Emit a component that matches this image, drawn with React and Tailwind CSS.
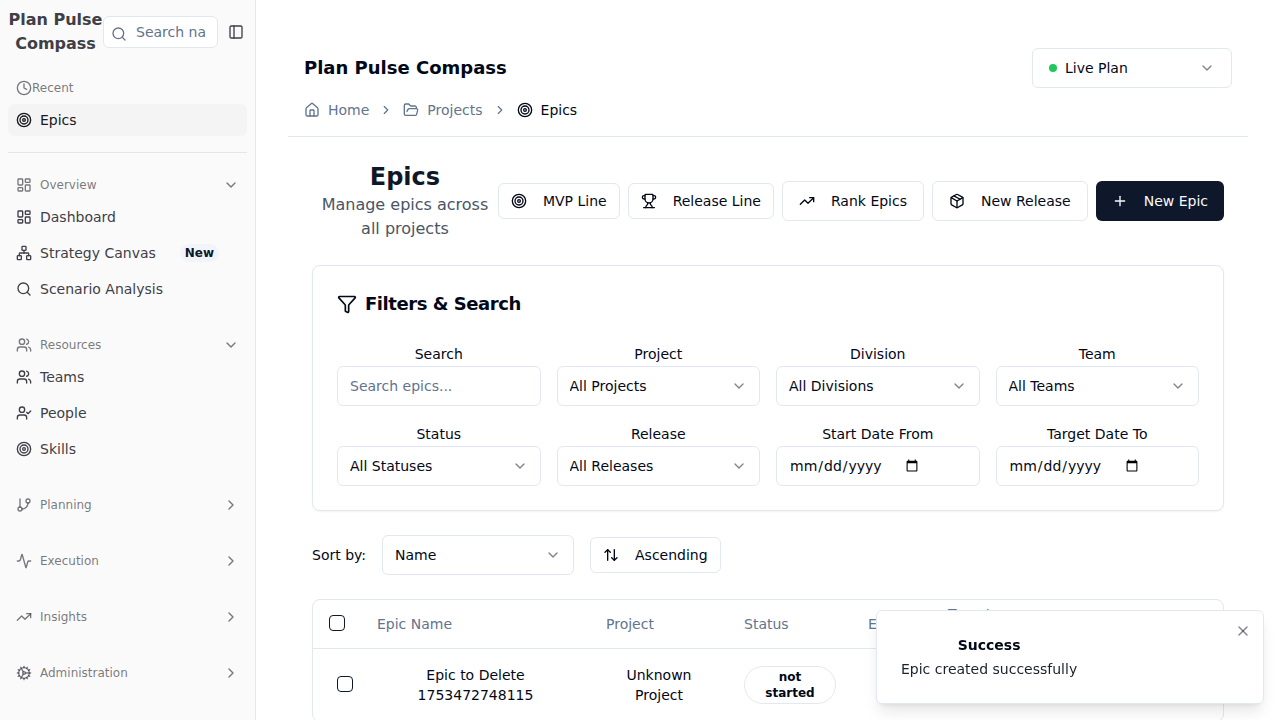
import React from 'react';
import {
  Activity, ArrowUpDown, ChevronDown, ChevronRight, Clock, Cog, Filter, FolderOpen,
  GitBranch, House, LayoutDashboard, Network, Package, PanelLeft, Plus, Search,
  Target, TrendingUp, Trophy, UserCheck, Users, X,
} from 'lucide-react';

const navGroups = [
  {
    label: 'Overview',
    icon: LayoutDashboard,
    items: [
      { label: 'Dashboard', icon: LayoutDashboard },
      { label: 'Strategy Canvas', icon: Network, badge: 'New' },
      { label: 'Scenario Analysis', icon: Search },
    ],
  },
  {
    label: 'Resources',
    icon: Users,
    items: [
      { label: 'Teams', icon: Users },
      { label: 'People', icon: UserCheck },
      { label: 'Skills', icon: Target },
    ],
  },
  { label: 'Planning', icon: GitBranch },
  { label: 'Execution', icon: Activity },
  { label: 'Insights', icon: TrendingUp },
  { label: 'Administration', icon: Cog },
];

function NavLink({ icon: Icon, label, badge, active }) {
  return (
    <a
      href="#"
      className={
        active
          ? 'flex h-8 items-center gap-2 rounded-md bg-zinc-100 px-2 text-sm text-zinc-900'
          : 'flex h-8 items-center gap-2 rounded-md px-2 text-sm text-zinc-700'
      }
    >
      <Icon className="size-4 shrink-0" />
      <span>{label}</span>
      {badge && (
        <span className="ml-4 rounded-full border border-transparent bg-slate-100 px-1 text-xs font-semibold text-slate-900">
          {badge}
        </span>
      )}
    </a>
  );
}

function NavGroup({ label, icon: Icon, items }) {
  const Chevron = items ? ChevronDown : ChevronRight;
  return (
    <div className="p-2">
      <button
        type="button"
        aria-expanded={Boolean(items)}
        className="flex h-8 w-full items-center gap-2 rounded-md px-2 text-xs text-zinc-700/70"
      >
        <Icon className="size-4 shrink-0" />
        <span>{label}</span>
        <Chevron className="ml-auto size-4" />
      </button>
      {items && (
        <div className="flex flex-col gap-1">
          {items.map((item) => (
            <NavLink key={item.label} {...item} />
          ))}
        </div>
      )}
    </div>
  );
}

function Sidebar() {
  return (
    <aside className="sticky top-0 h-screen w-64 shrink-0 overflow-hidden border-r border-slate-200 bg-neutral-50">
      <div className="flex items-center py-2 pr-[5px] pl-2">
        <h2 className="w-[95px] shrink-0 text-center text-base font-semibold text-zinc-700">
          Plan Pulse Compass
        </h2>
        <div className="relative min-w-0 flex-1">
          <Search className="absolute top-2.5 left-2 size-4 text-slate-500" />
          <input
            type="text"
            aria-label="Search navigation"
            placeholder="Search navigation..."
            className="block h-8 w-full rounded-md border border-slate-200 bg-white pr-3 pl-8 text-sm placeholder:text-slate-500"
          />
        </div>
        <button
          type="button"
          aria-label="Toggle sidebar"
          className="ml-1 flex size-7 shrink-0 items-center justify-center rounded-md text-zinc-700"
        >
          <PanelLeft className="size-4" />
        </button>
      </div>
      <nav className="flex flex-col gap-2">
        <div className="p-2">
          <div className="flex h-8 items-center px-2 text-xs text-zinc-700/70">
            <Clock className="size-4" />
            Recent
          </div>
          <NavLink icon={Target} label="Epics" active />
        </div>
        <div>
          <hr className="mx-2 border-neutral-200" />
          <div className="pt-2">
            <NavGroup {...navGroups[0]} />
          </div>
        </div>
        {navGroups.slice(1).map((group) => (
          <NavGroup key={group.label} {...group} />
        ))}
      </nav>
    </aside>
  );
}

function Select({ id, value, label }) {
  return (
    <div className="relative">
      <select
        id={id}
        aria-label={label}
        className="block h-10 w-full appearance-none rounded-md border border-slate-200 bg-white pr-9 pl-3 text-sm"
      >
        <option>{value}</option>
      </select>
      <ChevronDown className="pointer-events-none absolute top-3 right-[13px] size-4 opacity-50" />
    </div>
  );
}

function Field({ id, label, children }) {
  return (
    <div>
      <div className="text-center">
        <label htmlFor={id} className="text-sm">{label}</label>
      </div>
      {children}
    </div>
  );
}

function Button({ icon: Icon, small, primary, children }) {
  return (
    <button
      type="button"
      className={
        primary
          ? 'flex h-10 items-center gap-4 rounded-md bg-slate-900 px-4 text-sm whitespace-nowrap text-slate-50'
          : small
            ? 'flex h-9 items-center gap-4 rounded-md border border-slate-200 bg-white px-3 text-sm whitespace-nowrap'
            : 'flex h-10 items-center gap-4 rounded-md border border-slate-200 bg-white px-4 text-sm whitespace-nowrap'
      }
    >
      <Icon className="size-4" />
      {children}
    </button>
  );
}

function Checkbox({ label }) {
  return (
    <input
      type="checkbox"
      aria-label={label}
      className="size-4 appearance-none rounded-sm border border-slate-900 bg-white align-[-2px] checked:bg-slate-900"
    />
  );
}

const inputClass =
  'flex h-10 w-full rounded-md border border-slate-200 bg-white px-3 py-2 text-sm placeholder:text-slate-500';

function PageHeader() {
  return (
    <header className="flex flex-col gap-3 border-b border-slate-200 p-4">
      <div className="flex items-center justify-between">
        <h2 className="text-lg font-semibold">Plan Pulse Compass</h2>
        <div className="relative">
          <span className="pointer-events-none absolute top-4 left-[17px] size-2 rounded-full bg-[#22c55e]" />
          <select
            aria-label="Plan"
            className="block h-10 w-[200px] appearance-none rounded-md border border-slate-200 bg-white pr-9 pl-8 text-sm"
          >
            <option>Live Plan</option>
          </select>
          <ChevronDown className="pointer-events-none absolute top-3 right-[17px] size-4 opacity-50" />
        </div>
      </div>
      <nav aria-label="Breadcrumb" className="flex items-center gap-2.5 text-sm text-slate-500">
        <a href="#" className="flex items-center gap-2">
          <House className="size-4" />
          Home
        </a>
        <ChevronRight className="size-3.5" />
        <a href="#" className="flex items-center gap-2">
          <FolderOpen className="size-4" />
          Projects
        </a>
        <ChevronRight className="size-3.5" />
        <span aria-current="page" className="flex items-center gap-2 text-[#020817]">
          <Target className="size-4" />
          Epics
        </span>
      </nav>
    </header>
  );
}

function EpicsTable() {
  return (
    <div className="overflow-hidden rounded-lg border border-slate-200">
      <table className="w-full table-fixed text-sm">
        <colgroup>
          <col className="w-12" />
          <col className="w-[229px]" />
          <col className="w-[138px]" />
          <col className="w-[124px]" />
          <col className="w-20" />
          <col className="w-[90px]" />
          <col />
        </colgroup>
        <thead>
          <tr className="h-12 border-b border-slate-200 text-left text-slate-500">
            <th className="pl-4 font-medium"><Checkbox label="Select all epics" /></th>
            <th className="px-4 font-medium">Epic Name</th>
            <th className="px-4 font-medium">Project</th>
            <th className="px-4 font-medium">Status</th>
            <th className="px-4 font-medium">Effort</th>
            <th className="px-4 font-medium">Target Date</th>
            <th />
          </tr>
        </thead>
        <tbody>
          <tr className="text-center">
            <td className="py-4 pl-4"><Checkbox label="Select Epic to Delete" /></td>
            <td className="p-4">
              <div className="mx-auto max-w-32">Epic to Delete 1753472748115</div>
            </td>
            <td className="p-4">
              <div className="mx-auto max-w-20">Unknown Project</div>
            </td>
            <td className="px-4">
              <div className="rounded-full border border-slate-200 px-2.5 py-0.5 text-xs font-semibold">
                not started
              </div>
            </td>
            <td />
            <td />
            <td />
          </tr>
        </tbody>
      </table>
    </div>
  );
}

function Toast() {
  return (
    <div
      role="status"
      className="fixed right-4 bottom-4 flex w-[388px] items-center rounded-md border border-slate-200 bg-white p-6 pr-8 shadow-lg"
    >
      <div className="grid gap-1 text-center text-sm">
        <div className="font-semibold">Success</div>
        <div className="opacity-90">Epic created successfully</div>
      </div>
      <button
        type="button"
        aria-label="Close"
        className="absolute top-2 right-2 rounded-md p-1 text-[#020817]/50"
      >
        <X className="size-4" />
      </button>
    </div>
  );
}

export default function App() {
  return (
    <div className="flex min-h-screen bg-white font-['DejaVu_Sans',sans-serif] text-[#020817]">
      <Sidebar />
      <main className="min-w-0 flex-1 p-8">
        <PageHeader />
        <div className="flex flex-col gap-6 p-6">
          <div className="flex items-center justify-between">
            <div className="min-w-0 flex-1 px-2 text-center">
              <h1 className="text-2xl font-bold text-gray-900">Epics</h1>
              <p className="text-gray-600">Manage epics across all projects</p>
            </div>
            <div className="flex shrink-0 items-center gap-2">
              <Button icon={Target} small>MVP Line</Button>
              <Button icon={Trophy} small>Release Line</Button>
              <Button icon={TrendingUp}>Rank Epics</Button>
              <Button icon={Package}>New Release</Button>
              <Button icon={Plus} primary>New Epic</Button>
            </div>
          </div>

          <section className="rounded-lg border border-slate-200 bg-white p-6 shadow-xs">
            <h3 className="mb-6 flex items-center gap-2 text-lg font-semibold tracking-tight">
              <Filter className="size-5" />
              Filters &amp; Search
            </h3>
            <div className="grid grid-cols-4 gap-4">
              <Field id="search" label="Search">
                <input id="search" type="text" placeholder="Search epics..." className={inputClass} />
              </Field>
              <Field id="project" label="Project">
                <Select id="project" value="All Projects" />
              </Field>
              <Field id="division" label="Division">
                <Select id="division" value="All Divisions" />
              </Field>
              <Field id="team" label="Team">
                <Select id="team" value="All Teams" />
              </Field>
              <Field id="status" label="Status">
                <Select id="status" value="All Statuses" />
              </Field>
              <Field id="release" label="Release">
                <Select id="release" value="All Releases" />
              </Field>
              <Field id="start-date" label="Start Date From">
                <input id="start-date" type="date" className={inputClass} />
              </Field>
              <Field id="target-date" label="Target Date To">
                <input id="target-date" type="date" className={inputClass} />
              </Field>
            </div>
          </section>

          <div className="flex items-center gap-4">
            <label htmlFor="sort" className="text-sm">Sort by:</label>
            <div className="w-48">
              <Select id="sort" value="Name" />
            </div>
            <Button icon={ArrowUpDown} small>Ascending</Button>
          </div>

          <EpicsTable />
        </div>
      </main>
      <Toast />
    </div>
  );
}
